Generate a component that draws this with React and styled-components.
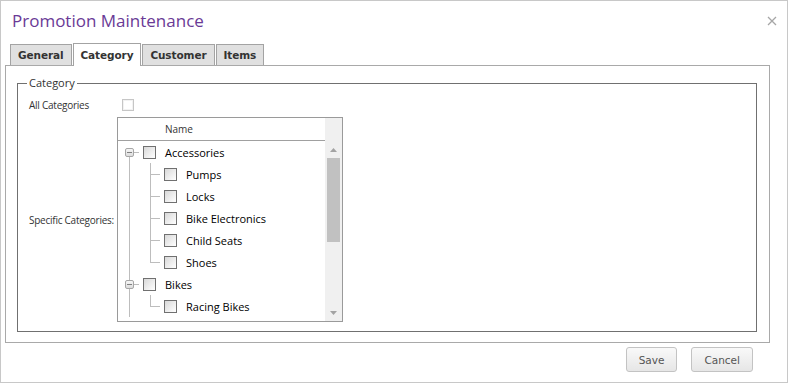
import styled, { createGlobalStyle } from 'styled-components';

const GlobalStyle = createGlobalStyle`
  html, body {
    margin: 0;
    padding: 0;
    background: #fff;
  }
  body {
    font-family: "Open Sans", "Noto Sans", sans-serif;
  }
  * {
    box-sizing: border-box;
  }
`;

const Dialog = styled.div`
  width: 788px;
  height: 383px;
  border: 1px solid #c8c8c8;
  background: #fff;
  display: flex;
  flex-direction: column;
`;

const TitleBar = styled.div`
  height: 42px;
  display: flex;
  align-items: center;
  justify-content: space-between;
  padding: 0 10px 2px 11px;
`;

const Title = styled.h1`
  margin: 0;
  font-size: 17px;
  font-weight: 400;
  line-height: 24px;
  color: #6a3a96;
`;

const Close = styled.button`
  border: none;
  background: none;
  padding: 0;
  width: 10px;
  height: 10px;
  display: flex;
  cursor: pointer;
`;

const TabStrip = styled.div`
  height: 22px;
  display: flex;
  align-items: flex-end;
  gap: 1px;
  padding-left: 9px;
`;

const Tab = styled.div`
  position: relative;
  z-index: ${p => (p.$active ? 1 : 0)};
  height: ${p => (p.$active ? '23px' : '21px')};
  margin-bottom: ${p => (p.$active ? '-1px' : '0')};
  padding: 0 7px;
  display: flex;
  align-items: center;
  border: 1px solid #a3a3a3;
  border-bottom: none;
  background: ${p => (p.$active ? '#fff' : '#e0e0e0')};
  font-family: "DejaVu Sans", Verdana, sans-serif;
  font-weight: 700;
  font-size: 10.5px;
  letter-spacing: -0.1px;
  color: #333;
  cursor: default;
`;

const Panel = styled.div`
  margin: 0 17px 0 4px;
  border: 1px solid #a9a9a9;
  padding: 9px 12px 10px 11px;
`;

const Fieldset = styled.fieldset`
  margin: 0;
  min-width: 0;
  border: 1px solid #707070;
  padding: 2px 11px 9px 11px;
`;

const Legend = styled.legend`
  padding: 0 2px;
  margin-left: -2px;
  font-size: 11px;
  line-height: 16px;
  color: #333;
`;

const FormGrid = styled.div`
  display: grid;
  grid-template-columns: 88px auto;
  align-items: center;
  row-gap: 1px;
`;

const FieldLabel = styled.label`
  font-size: 10px;
  letter-spacing: -0.25px;
  color: #333;
  white-space: nowrap;
`;

const CheckCell = styled.div`
  height: 23px;
  display: flex;
  align-items: center;
  padding-left: 5px;
`;

const PlainCheck = styled.span`
  width: 12px;
  height: 12px;
  border: 1px solid #c6c6c6;
  box-shadow: inset 0 0 0 1px #f2f2f2;
  background: #fff;
`;

const Tree = styled.div`
  width: 226px;
  height: 205px;
  border: 1px solid #9a9a9a;
  display: flex;
  overflow: hidden;
`;

const TreeMain = styled.div`
  flex: 1;
  display: flex;
  flex-direction: column;
  min-width: 0;
`;

const TreeHeader = styled.div`
  height: 23px;
  flex: none;
  border-bottom: 1px solid #a0a0a0;
  padding-left: 47px;
  display: flex;
  align-items: center;
  font-size: 10px;
  color: #333;
`;

const Row = styled.div`
  height: 22px;
  flex: none;
  display: flex;
  align-items: center;
`;

const Indent = styled.span`
  position: relative;
  width: 21px;
  height: 100%;
  flex: none;

  &::before {
    content: '';
    display: ${p => (p.$up || p.$down ? 'block' : 'none')};
    position: absolute;
    left: 11px;
    width: 1px;
    top: ${p => (p.$up ? '0' : '11px')};
    bottom: ${p => (p.$down ? '0' : '11px')};
    background: #bdbdbd;
  }

  &::after {
    content: '';
    display: ${p => (p.$right ? 'block' : 'none')};
    position: absolute;
    left: 11px;
    right: 0;
    top: 11px;
    height: 1px;
    background: #bdbdbd;
  }
`;

const Expander = styled.span`
  position: absolute;
  z-index: 1;
  left: 7px;
  top: 7px;
  width: 9px;
  height: 9px;
  border: 1px solid #a6a6a6;
  border-radius: 2px;
  background: linear-gradient(#f6f6f6, #dcdcdc);

  &::after {
    content: '';
    position: absolute;
    left: 1px;
    right: 1px;
    top: 3px;
    height: 1px;
    background: #808080;
  }
`;

const Check = styled.span`
  width: 13px;
  height: 13px;
  flex: none;
  margin-left: 4px;
  border: 1px solid #707070;
  background: linear-gradient(135deg, #d8d8d8, #ffffff);
`;

const NodeText = styled.span`
  margin-left: 9px;
  font-size: 11px;
  color: #000;
  white-space: nowrap;
`;

const Scrollbar = styled.div`
  width: 17px;
  flex: none;
  background: #f0f0f0;
  display: flex;
  flex-direction: column;
`;

const ScrollSpacer = styled.div`
  height: 23px;
  flex: none;
`;

const ScrollButton = styled.div`
  height: 17px;
  flex: none;
  display: flex;
  align-items: center;
  justify-content: center;
`;

const Thumb = styled.div`
  height: 84px;
  flex: none;
  margin: 0 2px;
  background: #c1c1c1;
`;

const Track = styled.div`
  flex: 1;
`;

const Footer = styled.div`
  display: flex;
  justify-content: flex-end;
  gap: 14px;
  padding: 4px 34px 0 0;
`;

const Button = styled.button`
  height: 25px;
  padding: 0 12px;
  border: 1px solid #c3c3c3;
  border-radius: 3px;
  background: linear-gradient(#f9f9f9, #e6e6e6);
  font-family: "DejaVu Sans", Verdana, sans-serif;
  font-size: 10.5px;
  color: #555;
  cursor: pointer;
`;

const nodes = [
  { label: 'Accessories', root: true, up: false },
  { label: 'Pumps' },
  { label: 'Locks' },
  { label: 'Bike Electronics' },
  { label: 'Child Seats' },
  { label: 'Shoes', last: true },
  { label: 'Bikes', root: true, up: true },
  { label: 'Racing Bikes', last: true }
];

const Arrow = ({ down }) => (
  <svg width="7" height="4" viewBox="0 0 7 4">
    <path d={down ? 'M0 0H7L3.5 4Z' : 'M0 4H7L3.5 0Z'} fill="#a3a3a3" />
  </svg>
);

const App = () => {
  const tabs = ['General', 'Category', 'Customer', 'Items'];

  return (
    <>
      <GlobalStyle />
      <Dialog>
        <TitleBar>
          <Title>Promotion Maintenance</Title>
          <Close aria-label="Close">
            <svg width="10" height="10" viewBox="0 0 10 10">
              <path d="M1 1L9 9M9 1L1 9" stroke="#a6a6a6" strokeWidth="1.3" />
            </svg>
          </Close>
        </TitleBar>
        <TabStrip>
          {tabs.map(t => (
            <Tab key={t} $active={t === 'Category'}>
              {t}
            </Tab>
          ))}
        </TabStrip>
        <Panel>
          <Fieldset>
            <Legend>Category</Legend>
            <FormGrid>
              <FieldLabel>All Categories</FieldLabel>
              <CheckCell>
                <PlainCheck />
              </CheckCell>
              <FieldLabel>Specific Categories:</FieldLabel>
              <Tree>
                <TreeMain>
                  <TreeHeader>Name</TreeHeader>
                  {nodes.map(n =>
                    n.root ? (
                      <Row key={n.label}>
                        <Indent $up={n.up} $down $right>
                          <Expander />
                        </Indent>
                        <Check />
                        <NodeText>{n.label}</NodeText>
                      </Row>
                    ) : (
                      <Row key={n.label}>
                        <Indent $up $down />
                        <Indent $up $down={!n.last} $right />
                        <Check />
                        <NodeText>{n.label}</NodeText>
                      </Row>
                    )
                  )}
                </TreeMain>
                <Scrollbar>
                  <ScrollSpacer />
                  <ScrollButton>
                    <Arrow />
                  </ScrollButton>
                  <Thumb />
                  <Track />
                  <ScrollButton>
                    <Arrow down />
                  </ScrollButton>
                </Scrollbar>
              </Tree>
            </FormGrid>
          </Fieldset>
        </Panel>
        <Footer>
          <Button>Save</Button>
          <Button>Cancel</Button>
        </Footer>
      </Dialog>
    </>
  );
};

export default App;
